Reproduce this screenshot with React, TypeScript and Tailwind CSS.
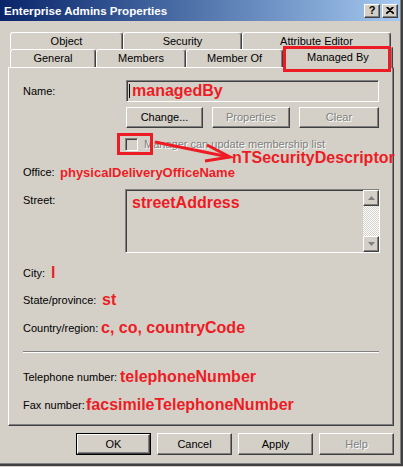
import React from "react";

const RAISED =
  "border border-t-white border-l-white border-r-[#404040] border-b-[#404040] shadow-[inset_-1px_-1px_0_#808080]";
const SUNKEN =
  "border border-t-[#808080] border-l-[#808080] border-r-white border-b-white shadow-[inset_1px_1px_0_#404040]";
const LBL = "text-[11px] leading-[13px] text-black";
const RED = "text-[#ed1c24] font-bold text-[16px] leading-none";
const DIS = "text-[#808080] [text-shadow:1px_1px_0_#ffffff]";

function Tab({ className, children }: { className: string; children: React.ReactNode }) {
  return (
    <div
      className={`${className} flex items-center justify-center text-[11px] leading-[13px] text-black border-t border-l border-t-white border-l-white border-r border-r-[#404040] shadow-[inset_-1px_0_0_#808080] rounded-tl-[3px] rounded-tr-[3px] bg-[#d4d0c8]`}
    >
      {children}
    </div>
  );
}

function Arrow({ up }: { up: boolean }) {
  return (
    <svg width="7" height="4" viewBox="0 0 7 4">
      {up ? (
        <polygon points="3.5,0 7,4 0,4" fill="#808080" />
      ) : (
        <polygon points="0,0 7,0 3.5,4" fill="#808080" />
      )}
    </svg>
  );
}

export default function App() {
  return (
    <div className="relative w-[403px] h-[467px] bg-[#d4d0c8] overflow-hidden font-['Liberation_Sans',Arial,sans-serif]">
      <div className="w-[403px] h-[466px] flex flex-col border-r-2 border-b-2 border-r-[#404040] border-b-[#404040] shadow-[inset_-1px_-1px_0_#808080]">
        {/* Title bar */}
        <div className="h-[21px] mr-[1px] flex items-center justify-between pl-[4px] pr-[2px] bg-gradient-to-r from-[#0a246a] to-[#a6caf0]">
          <span className="text-white font-bold text-[11.6px] leading-none">Enterprise Admins Properties</span>
          <div className="flex gap-[2px]">
            <div className={`w-[16px] h-[14px] bg-[#d4d0c8] flex items-center justify-center ${RAISED}`}>
              <span className="text-black font-bold text-[11px] leading-none">?</span>
            </div>
            <div className={`w-[16px] h-[14px] bg-[#d4d0c8] flex items-center justify-center ${RAISED}`}>
              <svg width="8" height="7" viewBox="0 0 8 7">
                <path d="M0.5 0 L7.5 7 M1.5 0 L8 6.5 M7.5 0 L0.5 7 M6.5 0 L0 6.5" stroke="#000" strokeWidth="1.1" />
              </svg>
            </div>
          </div>
        </div>

        {/* Body */}
        <div className="flex flex-col pl-[8px] pt-[11px]">
          <div className="flex flex-col pl-[2px]">
            <div className="flex h-[17px]">
              <Tab className="w-[113px] h-[17px]">Object</Tab>
              <Tab className="w-[119px] h-[17px]">Security</Tab>
              <Tab className="w-[149px] h-[17px]">Attribute Editor</Tab>
            </div>
            <div className="flex items-end h-[18px]">
              <Tab className="w-[86px] h-[18px]">General</Tab>
              <Tab className="w-[90px] h-[18px]">Members</Tab>
              <Tab className="w-[97px] h-[18px]">Member Of</Tab>
              <div className="relative z-10 w-[110px] h-[22px] -mb-[1px] flex items-start justify-center pt-[4px] text-[11px] leading-[13px] text-black bg-[#d4d0c8] border-t border-l border-t-white border-l-white border-r border-r-[#404040] shadow-[inset_-1px_0_0_#808080] rounded-tl-[3px] rounded-tr-[3px]">
                Managed By
              </div>
            </div>
          </div>

          {/* Panel */}
          <div className="w-[386px] h-[359px] flex flex-col pl-[14px] pt-[12px] border border-t-white border-l-white border-r-[#404040] border-b-[#404040] shadow-[inset_-1px_-1px_0_#808080]">
            {/* Name */}
            <div className="flex items-center h-[22px]">
              <span className={`${LBL} w-[103px]`}>Name:</span>
              <div className={`w-[253px] h-[22px] flex items-center pl-[2px] ${SUNKEN}`}>
                <span className="w-[1px] h-[14px] bg-black mr-[2px]" />
                <span className={RED}>managedBy</span>
              </div>
            </div>
            {/* Buttons */}
            <div className="flex mt-[5px] pl-[103px] gap-[9px]">
              <div className={`w-[77px] h-[21px] flex items-center justify-center ${LBL} ${RAISED}`}>Change...</div>
              <div className={`w-[78px] h-[21px] flex items-center justify-center text-[11px] leading-[13px] ${DIS} ${RAISED}`}>Properties</div>
              <div className={`w-[80px] h-[21px] flex items-center justify-center text-[11px] leading-[13px] ${DIS} ${RAISED}`}>Clear</div>
            </div>
            {/* Checkbox */}
            <div className="flex items-center mt-[10px] pl-[102px] h-[13px]">
              <div className={`w-[13px] h-[13px] bg-[#d4d0c8] ${SUNKEN}`} />
              <span className={`ml-[6px] text-[11px] leading-[13px] ${DIS}`}>Manager can update membership list</span>
            </div>
            {/* Office */}
            <div className="flex items-center mt-[13px] h-[16px]">
              <span className={`${LBL} w-[37px]`}>Office:</span>
              <span className="text-[#ed1c24] font-bold text-[13px] leading-none">physicalDeliveryOfficeName</span>
            </div>
            {/* Street */}
            <div className="flex mt-[9px]">
              <span className={`${LBL} w-[102px] pt-[5px]`}>Street:</span>
              <div className={`w-[255px] h-[64px] flex ${SUNKEN}`}>
                <div className="flex-1 pl-[6px] pt-[1px]">
                  <span className={RED}>streetAddress</span>
                </div>
                <div className="w-[16px] flex flex-col">
                  <div className={`w-[16px] h-[16px] bg-[#d4d0c8] flex items-center justify-center ${RAISED}`}>
                    <Arrow up={true} />
                  </div>
                  <div className="flex-1 bg-[repeating-conic-gradient(#d4d0c8_0_25%,#ffffff_0_50%)] bg-[length:2px_2px]" />
                  <div className={`w-[16px] h-[16px] bg-[#d4d0c8] flex items-center justify-center ${RAISED}`}>
                    <Arrow up={false} />
                  </div>
                </div>
              </div>
            </div>
            {/* City */}
            <div className="flex items-center mt-[12px] h-[16px]">
              <span className={`${LBL} w-[28px]`}>City:</span>
              <span className={RED}>l</span>
            </div>
            {/* State */}
            <div className="flex items-center mt-[11px] h-[16px]">
              <span className={`${LBL} w-[79px]`}>State/province:</span>
              <span className={RED}>st</span>
            </div>
            {/* Country */}
            <div className="flex items-center mt-[12px] h-[16px]">
              <span className={`${LBL} w-[78px]`}>Country/region:</span>
              <span className={RED}>c, co, countryCode</span>
            </div>
            {/* Separator */}
            <div className="mt-[15px] w-[356px] h-[2px] border-t border-t-[#808080] border-b border-b-white" />
            {/* Telephone */}
            <div className="flex items-center mt-[16px] h-[16px]">
              <span className={`${LBL} w-[97px]`}>Telephone number:</span>
              <span className={RED}>telephoneNumber</span>
            </div>
            {/* Fax */}
            <div className="flex items-center mt-[12px] h-[16px]">
              <span className={`${LBL} w-[63px]`}>Fax number:</span>
              <span className={RED}>facsimileTelephoneNumber</span>
            </div>
          </div>

          {/* Dialog buttons */}
          <div className="flex justify-end gap-[6px] mt-[7px] w-[386px]">
            <div className="w-[75px] h-[22px] border border-black">
              <div className={`w-full h-full flex items-center justify-center ${LBL} ${RAISED}`}>OK</div>
            </div>
            <div className={`w-[75px] h-[22px] flex items-center justify-center ${LBL} ${RAISED}`}>Cancel</div>
            <div className={`w-[75px] h-[22px] flex items-center justify-center ${LBL} ${RAISED}`}>Apply</div>
            <div className={`w-[75px] h-[22px] flex items-center justify-center text-[11px] leading-[13px] ${DIS} ${RAISED}`}>Help</div>
          </div>
        </div>
      </div>

      {/* Annotations overlay */}
      <div className="absolute left-[283px] top-[46px] w-[108px] h-[26px] border-[3px] border-[#ed1c24] z-20" />
      <div className="absolute left-[117px] top-[133px] w-[36px] h-[22px] border-[3px] border-[#ed1c24] z-20" />
      <svg className="absolute left-0 top-0 z-20 pointer-events-none" width="403" height="467" viewBox="0 0 403 467">
        <path d="M155 142 L229 157" stroke="#ed1c24" strokeWidth="3" fill="none" />
        <path d="M207 145 L230 157 L205 161" stroke="#ed1c24" strokeWidth="3" fill="none" strokeLinejoin="miter" />
      </svg>
      <span className={`absolute left-[232px] top-[150px] z-20 ${RED}`}>nTSecurityDescriptor</span>
    </div>
  );
}
